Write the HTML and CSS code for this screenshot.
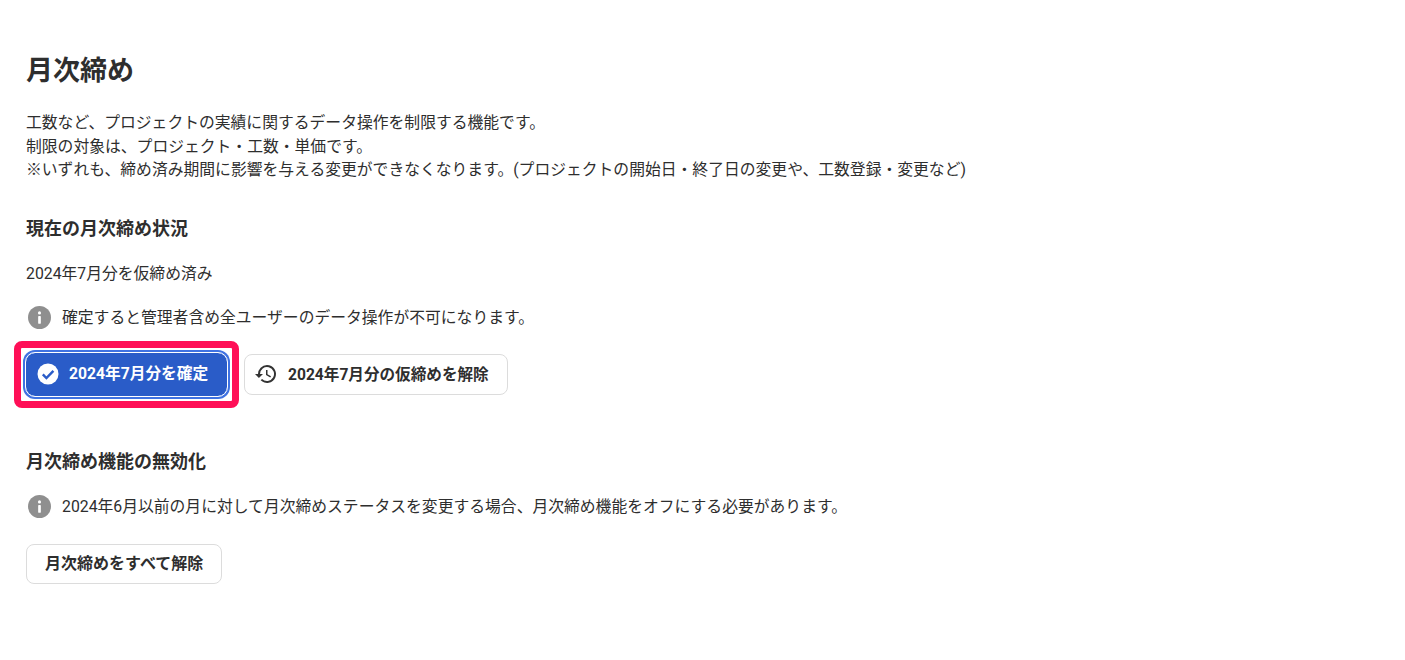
FILE: index.html
```html
<!DOCTYPE html>
<html lang="ja">
<head>
    <meta charset="utf-8">
    <title>月次締め</title>
    <link rel="stylesheet" href="styles.css">
</head>
<body>
    <main class="page">
        <h1 class="title">月次締め</h1>
        <p class="description">
            工数など、プロジェクトの実績に関するデータ操作を制限する機能です。<br>
            制限の対象は、プロジェクト・工数・単価です。<br>
            ※いずれも、締め済み期間に影響を与える変更ができなくなります。(プロジェクトの開始日・終了日の変更や、工数登録・変更など)
        </p>

        <section class="status-section">
            <h2 class="heading">現在の月次締め状況</h2>
            <p class="status">2024年7月分を仮締め済み</p>
            <div class="notice">
                <svg class="notice-icon" viewBox="0 0 24 24"><circle cx="12" cy="12" r="12" fill="#8f8f8f"/><circle cx="12" cy="7.2" r="1.6" fill="#fff"/><rect x="10.6" y="10.4" width="2.8" height="8.2" rx="0.5" fill="#fff"/></svg>
                <span>確定すると管理者含め全ユーザーのデータ操作が不可になります。</span>
            </div>
            <div class="buttons">
                <div class="highlighted">
                    <button class="button primary">
                        <svg class="button-icon" viewBox="0 0 24 24"><circle cx="12" cy="12" r="10.5" fill="#fff"/><path d="M6.8 12.4l3.6 3.6 7-7.2" fill="none" stroke="#2a5cc8" stroke-width="2.4"/></svg>
                        <span class="button-label">2024年7月分を確定</span>
                    </button>
                    <div class="highlight-frame"></div>
                </div>
                <button class="button secondary">
                    <svg class="button-icon" viewBox="0 0 24 24"><path d="M13 3a9 9 0 0 0-9 9H1l3.9 3.9L9 12H6a7 7 0 1 1 2.05 4.95l-1.42 1.42A9 9 0 1 0 13 3zm-1 5v5l4.25 2.52.77-1.28-3.52-2.09V8z" fill="#333"/></svg>
                    <span class="button-label">2024年7月分の仮締めを解除</span>
                </button>
            </div>
        </section>

        <section class="disable-section">
            <h2 class="heading">月次締め機能の無効化</h2>
            <div class="notice">
                <svg class="notice-icon" viewBox="0 0 24 24"><circle cx="12" cy="12" r="12" fill="#8f8f8f"/><circle cx="12" cy="7.2" r="1.6" fill="#fff"/><rect x="10.6" y="10.4" width="2.8" height="8.2" rx="0.5" fill="#fff"/></svg>
                <span>2024年6月以前の月に対して月次締めステータスを変更する場合、月次締め機能をオフにする必要があります。</span>
            </div>
            <button class="button secondary plain"><span class="button-label">月次締めをすべて解除</span></button>
        </section>
    </main>
</body>
</html>
```

FILE: styles.css
```css
body {
    margin: 0;
    padding: 0;
    font-family: Roboto, "Noto Sans CJK JP", sans-serif;
    color: #2e2e2e;
    background-color: white;
}

.page {
    padding: 54px 26px 0;
}

.title {
    margin: 0;
    font-size: 27px;
    line-height: 34px;
    font-weight: 700;
}

.description {
    margin: 23px 0 0;
    font-size: 15.8px;
    line-height: 23.5px;
}

.status-section {
    margin-top: 35px;
}

.heading {
    margin: 0;
    font-size: 18px;
    line-height: 24px;
    font-weight: 700;
}

.status {
    margin: 21px 0 0;
    font-size: 15.8px;
    line-height: 24px;
}

.notice {
    display: flex;
    align-items: center;
    gap: 11px;
    margin-top: 20px;
    padding-left: 2px;
    font-size: 15.8px;
    line-height: 24px;
}

.notice-icon {
    width: 23px;
    height: 23px;
    flex-shrink: 0;
}

.buttons {
    display: flex;
    align-items: center;
    gap: 16px;
    margin-top: 22px;
}

.highlighted {
    position: relative;
    margin-left: -1px;
    display: flex;
}

.highlight-frame {
    position: absolute;
    top: -11px;
    left: -11px;
    right: -11px;
    bottom: -11px;
    border: 7px solid #ff0f57;
    border-radius: 8px;
}

.button {
    display: inline-flex;
    align-items: center;
    gap: 10px;
    height: 41px;
    padding: 0 18px 0 9px;
    border-radius: 8px;
    font-family: inherit;
    font-size: 15.6px;
    font-weight: 700;
    cursor: pointer;
}

.button-label {
    padding-bottom: 3px;
}

.button-icon {
    width: 24px;
    height: 24px;
}

.primary {
    gap: 9px;
    width: 203px;
    height: 45px;
    padding: 0 0 0 10px;
    font-size: 15.7px;
    color: white;
    background-color: #2a5cc8;
    background-clip: padding-box;
    border: 1px solid white;
    border-radius: 10px;
    box-shadow: 0 0 0 2px #3f72e2;
}

.secondary {
    color: #2e2e2e;
    background-color: white;
    border: 1px solid #dcdcdc;
}

.plain {
    height: 40px;
    padding: 0 18px;
    font-size: 16px;
}

.disable-section {
    margin-top: 53px;
}

.disable-section .notice {
    margin-top: 21px;
}

.disable-section .button {
    margin-top: 25px;
}
```
